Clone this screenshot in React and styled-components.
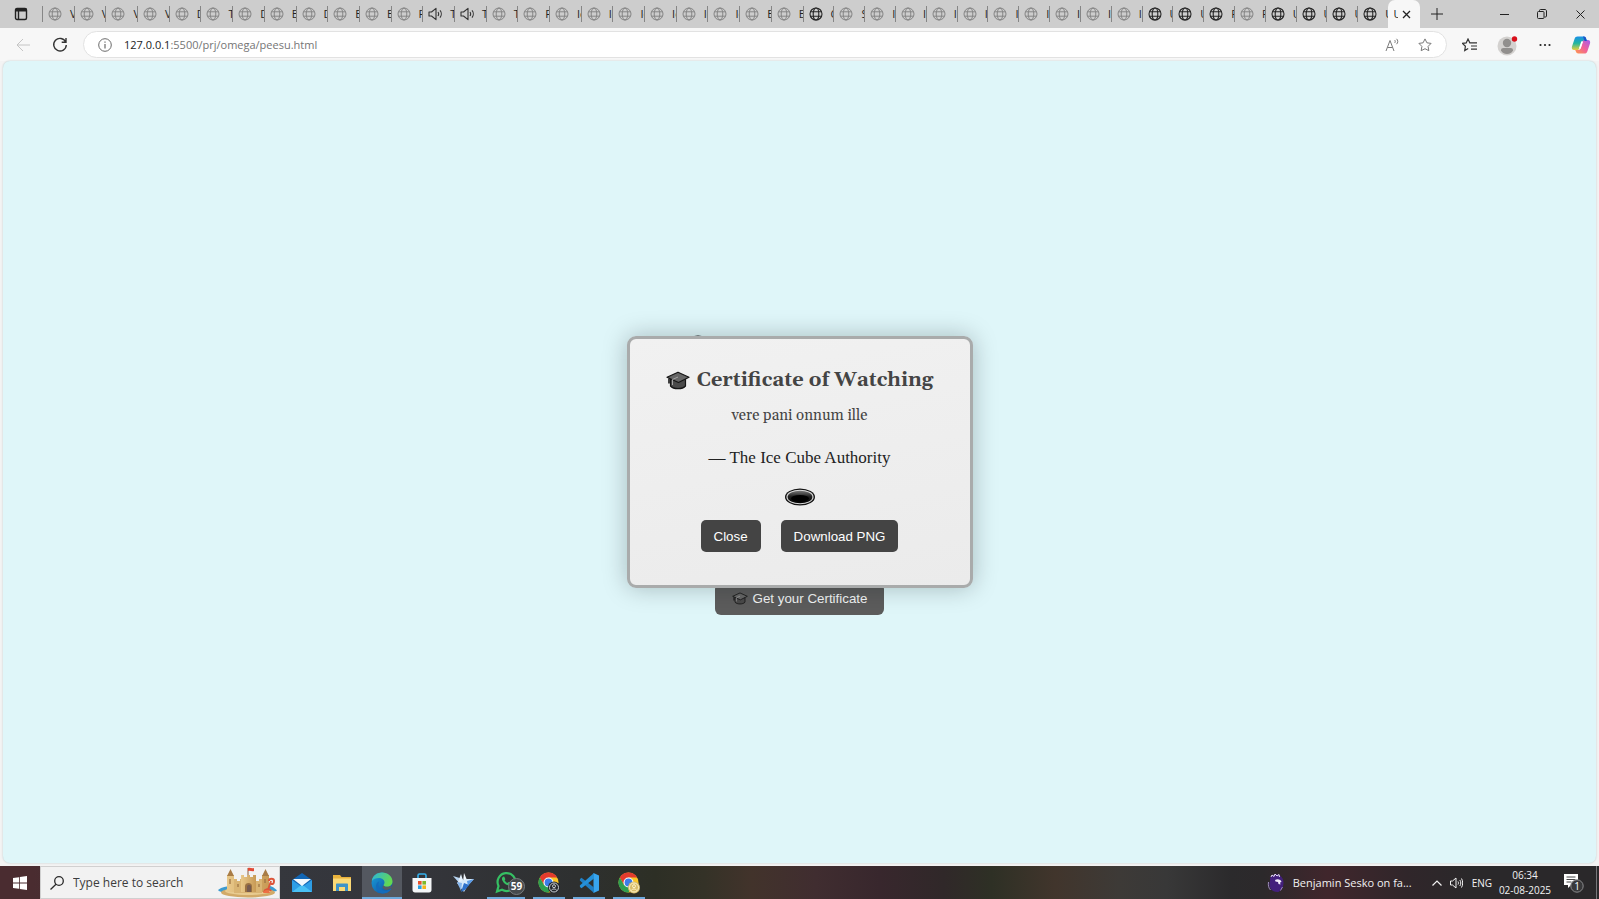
import React from "react";
import styled, { createGlobalStyle, css } from "styled-components";

const Global = createGlobalStyle`
  *, *::before, *::after { box-sizing: border-box; }
  html, body, #root { height: 100%; }
  body { margin: 0; overflow: hidden; background: #f7f7f7; }
  button { border: 0; margin: 0; padding: 0; background: none; color: inherit; cursor: pointer; }
  svg { display: block; flex: none; }
`;

const ui = `"Open Sans", "Noto Sans", sans-serif`;

const Window = styled.div`
  height: 100%;
  display: flex;
  flex-direction: column;
  font-family: ${ui};
`;

/* ---------- tab strip ---------- */
const TabStrip = styled.header`
  height: 28px;
  flex: none;
  display: flex;
  background: #cdcdcd;
  color: #222;
`;
const StripButton = styled.button`
  flex: none;
  width: ${(p) => p.$w}px;
  display: grid;
  place-items: center;
`;
const Tabs = styled.nav`
  flex: 1;
  min-width: 0;
  display: flex;
`;
const TabGroup = styled.div`
  flex: ${(p) => p.$share} 1 0;
  min-width: 0;
  display: grid;
  grid-template-columns: repeat(${(p) => p.$count}, minmax(0, 1fr));
`;
const Tab = styled.button`
  display: flex;
  align-items: center;
  gap: 8px;
  min-width: 0;
  overflow: hidden;
  font: 11px/16px ${ui};
  color: #222;
  &::before {
    content: "";
    flex: none;
    width: 1px;
    height: 16px;
    margin-right: -3px;
    background: #868686;
  }
`;
const ActiveTab = styled.div`
  flex: none;
  width: 32px;
  display: flex;
  align-items: center;
  justify-content: center;
  gap: 4px;
  padding-right: 4px;
  background: #f7f7f7;
  border-radius: 7px 7px 0 0;
  font: 11px/16px ${ui};
`;
const TabLabel = styled.span`
  width: 4px;
  overflow: hidden;
`;
const Gap = styled.div`
  flex: none;
  width: 31px;
`;

/* ---------- toolbar ---------- */
const Toolbar = styled.div`
  height: 33px;
  flex: none;
  display: flex;
  align-items: center;
  padding: 0 0 0 4px;
  background: #f7f7f7;
  color: #333;
`;
const ToolButton = styled.button`
  flex: none;
  width: 37px;
  height: 28px;
  display: grid;
  place-items: center;
`;
const AddressBar = styled.form`
  flex: 1;
  min-width: 0;
  height: 27px;
  margin: 0 4px 0 5px;
  padding: 0 9px 0 14px;
  display: flex;
  align-items: center;
  gap: 12px;
  background: #fff;
  border: 1px solid #e2e2e2;
  border-radius: 14px;
`;
const Url = styled.label`
  flex: 1;
  display: grid;
  align-items: center;
  font: 11px/16px ${ui};
  color: #757575;
  b { font-weight: 400; color: #1c1c1c; }
  > * { grid-area: 1 / 1; }
`;
const UrlInput = styled.input`
  width: 100%;
  border: 0;
  padding: 0;
  outline: 0;
  background: none;
  font: inherit;
`;
const InlineButton = styled.button`
  width: 24px;
  margin-right: ${(p) => p.$gap || 0}px;
  display: grid;
  place-items: center;
  color: #7a7a7a;
`;

/* ---------- page ---------- */
const Frame = styled.div`
  flex: 1;
  min-height: 0;
  display: flex;
  padding: 0 3px 3px;
  background: #f3f3f3;
`;
const Page = styled.main`
  flex: 1;
  display: grid;
  place-items: center;
  background: #dff6f9;
  border-radius: 7px;
  box-shadow: 0 0 2px #b9c4c6;
  overflow: hidden;
  > * { grid-area: 1 / 1; }
`;
const Backdrop = styled.section`
  display: flex;
  flex-direction: column;
  align-items: center;
  justify-content: space-between;
  height: 305px;
  padding-top: 25px;
`;
const BackdropHead = styled.div`
  width: 234px;
`;
const CertButton = styled.button`
  display: flex;
  align-items: center;
  gap: 5px;
  height: 32px;
  padding: 0 17px;
  border-radius: 6px;
  background: #5c5c5c;
  color: #f2f5f5;
  font-family: "Liberation Sans", Arial, sans-serif;
`;
const Dialog = styled.section`
  z-index: 1;
  display: flex;
  flex-direction: column;
  align-items: center;
  padding: 28px 36px 33px;
  width: 346px;
  border: 3px solid #a9abab;
  border-radius: 9px;
  background: linear-gradient(170deg, #f1f1f1, #eeeeee 50%, #ebebeb);
  box-shadow: 0 0 24px rgba(0, 20, 25, 0.26);
  font-family: Georgia, Gelasio, "Liberation Serif", serif;
  text-align: center;
`;
const Title = styled.h1`
  margin: 0;
  display: flex;
  align-items: center;
  gap: 7px;
  font-size: 20px;
  line-height: 26px;
  white-space: nowrap;
  color: #444;
`;
const Message = styled.p`
  margin: 11px 0 0;
  font-size: 15px;
  line-height: 24px;
  color: #444;
`;
const Signature = styled.p`
  margin: 18px 0;
  font: 17px/24px "Liberation Serif", "Times New Roman", serif;
  color: #222;
`;
const Actions = styled.div`
  display: flex;
  gap: 20px;
  margin-top: 14px;
`;
const ActionButton = styled.button`
  height: 32px;
  padding: 0 13px;
  border-radius: 5px;
  background: #444;
  color: #fff;
  font-family: "Liberation Sans", Arial, sans-serif;
`;

/* ---------- taskbar ---------- */
const Taskbar = styled.footer`
  height: 33px;
  flex: none;
  display: flex;
  color: #f2f2f2;
  background: linear-gradient(90deg,
    #4a2c30 0%, #4a2c30 2%, #35373d 17%, #34353b 26%, #2e3030 36%, #2d2f25 41%,
    #343227 44%, #42332b 47%, #402d30 51%, #38272d 55%, #302829 59%,
    #2e3025 62%, #41352c 66%, #3d3a37 70%, #383838 73%, #2b2a2c 77%,
    #2c292b 79%, #40262c 83%, #30262a 88%, #2a282a 92%, #2a282a 100%);
`;
const Start = styled.button`
  width: 40px;
  flex: none;
  display: grid;
  place-items: center;
`;
const Search = styled.label`
  width: 240px;
  flex: none;
  display: flex;
  align-items: center;
  padding-left: 9px;
  background: #f2f2f2;
  border: 1px solid #d0d0d0;
`;
const SearchInput = styled.input`
  flex: 1;
  min-width: 0;
  margin-left: 9px;
  padding: 0;
  border: 0;
  outline: 0;
  background: none;
  font: 12px/16px ${ui};
  &::placeholder { color: #3c3c3c; opacity: 1; }
`;
const Apps = styled.div`
  flex: none;
  width: 367px;
  margin-left: 2px;
  display: grid;
  grid-template-columns: repeat(9, 1fr);
`;
const AppButton = styled.button`
  display: grid;
  place-items: center;
  ${(p) => p.$open && css`box-shadow: inset 0 -2px #6ea9dc; margin: 0 4px;`}
  ${(p) => p.$active && css`box-shadow: inset 0 -2px #6ea9dc; background: #545860; margin: 0;`}
`;
const Tray = styled.div`
  margin-left: auto;
  display: flex;
  align-items: center;
  font-size: 11px;
  line-height: 16px;
`;
const TrayButton = styled.button`
  height: 33px;
  display: flex;
  align-items: center;
  gap: 8px;
  margin-right: ${(p) => p.$after || 0}px;
  font: ${(p) => p.$size || 11}px/16px ${ui};
  white-space: nowrap;
`;
const Clock = styled.time`
  width: 54px;
  margin-right: 12px;
  font-size: 10px;
  line-height: 15px;
  text-align: center;
  white-space: nowrap;
`;
const ShowDesktop = styled.button`
  width: 3px;
  height: 33px;
  border-left: 1px solid #77777a;
`;

/* ---------- drawings ---------- */
const Icon = ({ w = 16, h, vb, children, ...rest }) => (
  <svg width={w} height={h || w} viewBox={vb || `0 0 ${w} ${h || w}`} fill="none" stroke="currentColor" aria-hidden="true" {...rest}>
    {children}
  </svg>
);

const Globe = ({ light }) => (
  <Icon w={14} stroke={light ? "#858585" : "#262626"} strokeWidth={light ? 1 : 1.1}>
    <circle cx="7" cy="7" r="6" />
    <ellipse cx="7" cy="7" rx="2.8" ry="6" />
    <path d="M1.5 4.8h11M1.5 9.2h11" />
  </Icon>
);
const TabSpeaker = () => (
  <Icon w={14} stroke="#333" strokeWidth="1.1">
    <path d="M1 5h2.5L8 1.3v11.4L3.5 9H1zM10 5c.8 1.2.8 2.8 0 4M12 3.4c1.7 2 1.7 5.2 0 7.2" strokeLinejoin="round" />
  </Icon>
);
const Cap = ({ w, h }) => (
  <Icon w={w} h={h} vb="0 0 24 19" stroke="#151515" strokeWidth="1.2" strokeLinejoin="round">
    <path d="M4.500 8v7c3 3.600 12 3.600 15 0V8z" fill="#4a4a4a" />
    <path d="M1 6.200 12 1.200l11 5L12.500 11.500z" fill="#666" />
    <path d="M12 6 6.500 8.500V14" stroke="#a5a5a5" strokeWidth="1" />
    <path d="M3 7.5v5" strokeWidth="1.6" />
  </Icon>
);
const Hole = () => (
  <Icon w={30} h={18} stroke="none">
    <defs>
      <linearGradient id="hole" x1="0" y1="0" x2="0" y2="1">
        <stop offset="0" stopColor="#777" /><stop offset=".45" stopColor="#222" /><stop offset="1" stopColor="#000" />
      </linearGradient>
    </defs>
    <ellipse cx="15" cy="9" rx="15" ry="8.6" fill="#111" />
    <ellipse cx="15" cy="9" rx="13.6" ry="7.3" fill="#d8d8d8" />
    <ellipse cx="15" cy="9" rx="12.4" ry="6.2" fill="url(#hole)" />
    <ellipse cx="15" cy="10.4" rx="9" ry="3.4" fill="#000" />
  </Icon>
);
const Avatar = () => (
  <Icon w={22} h={22} vb="-1 0 22 22" stroke="none">
    <circle cx="10" cy="12" r="9.5" fill="#d3d1cf" />
    <circle cx="10" cy="9" r="4.2" fill="#918f8d" />
    <path d="M4 16.2c0-1.4 1-2.2 2.400-2.200h7.200c1.400 0 2.400.8 2.400 2.200-1 2.600-3.200 3.800-6 3.800s-5-1.200-6-3.800z" fill="#918f8d" />
    <circle cx="17.500" cy="5" r="2.700" fill="#d8101c" />
  </Icon>
);
const Copilot = () => (
  <Icon w={20} h={20} stroke="none">
    <defs>
      <linearGradient id="cpA" x1="0" y1="0" x2="0" y2="1"><stop offset="0" stopColor="#1a8fe8" /><stop offset=".5" stopColor="#22b6a0" /><stop offset="1" stopColor="#e8cf3c" /></linearGradient>
      <linearGradient id="cpB" x1="1" y1="0" x2="0" y2="1"><stop offset="0" stopColor="#a35cf0" /><stop offset=".5" stopColor="#f0609a" /><stop offset="1" stopColor="#ff9a4a" /></linearGradient>
    </defs>
    <path d="M6.500 1.500h6.200c1.400 0 2 .8 2.400 2l.8 2.500h-3c-1.600 0-2.300.8-2.700 2.200L8.500 13c-.5 1.500-1.200 2-2.500 2H3.200C1 15 .5 13.200 1 11.500l2.600-7.700c.5-1.500 1.400-2.300 2.900-2.300z" fill="url(#cpA)" />
    <path d="M13.500 18.500H7.300c-1.400 0-2-.8-2.400-2L4.200 15h3c1.500 0 2.200-.8 2.600-2.200L11.500 7c.5-1.500 1.200-2 2.500-2h2.800c2.200 0 2.700 1.800 2.200 3.500l-2.600 7.700c-.5 1.500-1.400 2.300-2.900 2.300z" fill="url(#cpB)" />
    <path d="M12 1.500h1c1.200.1 1.800.9 2.100 2l.8 2.500h-2.400z" fill="#1b55c8" />
    <path d="M11.200 6.500 8.800 13.500" stroke="#fff" strokeWidth="1.800" />
  </Icon>
);
const Castle = () => (
  <Icon w={62} h={31} stroke="none">
    <defs>
      <linearGradient id="sand" x1="0" y1="0" x2="1" y2="0"><stop offset="0" stopColor="#e8c88a" /><stop offset="1" stopColor="#c89a55" /></linearGradient>
    </defs>
    <path d="M1 23c4-3 8-4 14-4v6H6c-2 0-4-.5-5-2z" fill="#3d9bd0" />
    <path d="M46 18c6 0 12 2 14 6l-12 2z" fill="#3d9bd0" />
    <ellipse cx="31" cy="25.500" rx="27" ry="5" fill="#d2aa68" />
    <ellipse cx="31" cy="24" rx="23" ry="4" fill="#e8cb90" />
    <path d="M10 8h7v17h-7zM45 8h7v17h-7z" fill="url(#sand)" />
    <path d="m10 9 3.500-7L17 9zM45 9l3.500-7L52 9z" fill="#a97c46" />
    <path d="M17 12h3v2h3v-2h3v2h10v-2h3v2h3v-2h3v14H17z" fill="#d9b473" />
    <path d="M24 8h3v2h3V8h3v2h3V8h3v17H24z" fill="url(#sand)" />
    <path d="M28 25v-6c0-4 7-4 7 0v6z" fill="#9a7142" />
    <path d="M30 25v-5c0-3 4-3 4 0v5z" fill="#755a4f" />
    <path d="M31 8V1" stroke="#8c5a3a" strokeWidth="1" />
    <path d="M31 1c2-1 4 1 6 0v3c-2 1-4-1-6 0z" fill="#e24a36" />
    <path d="M13 12v5M48 12v4M21 17v3M42 17v3" stroke="#9a7142" strokeWidth="1.200" />
    <path d="m54 14-3 9M52 14c0-3 5-3 5 0s-1 3-3 3M47 25c1-3 5-4 7-1" stroke="#dd5439" strokeWidth="2" />
    <path d="M46 26c1-4 6-4 7 0z" fill="#ed7044" />
  </Icon>
);
const Mail = () => (
  <Icon w={22} h={20} stroke="none">
    <path d="M1 7 11 0l10 7v12H1z" fill="#1266b4" />
    <path d="m1 7 10 7 10-7v11c0 .6-.4 1-1 1H2c-.6 0-1-.4-1-1z" fill="#2e9ee6" />
    <path d="m1 19 10-7.500L21 19z" fill="#49c0f4" />
    <path d="M2 6h18l-9 7z" fill="#f2f8fd" />
  </Icon>
);
const Explorer = () => (
  <Icon w={20} h={18} stroke="none">
    <path d="M1 1h7l1.500 2H19v14H1z" fill="#e9b23c" />
    <path d="M1 4.500h18V17H1z" fill="#fbd976" />
    <path d="M4 10.500c0-.6.400-1 1-1h10c.6 0 1 .4 1 1V17h-3v-4H7v4H4z" fill="#3f93c8" />
  </Icon>
);
const Edge = () => (
  <Icon w={22} stroke="none">
    <defs>
      <linearGradient id="eA" x1="0" y1="0" x2="1" y2=".4"><stop offset="0" stopColor="#2cb5dd" /><stop offset="1" stopColor="#63d951" /></linearGradient>
      <linearGradient id="eB" x1="0" y1="0" x2="1" y2="1"><stop offset="0" stopColor="#1aa0dd" /><stop offset="1" stopColor="#0c4c9c" /></linearGradient>
    </defs>
    <circle cx="11" cy="11" r="10.500" fill="url(#eB)" />
    <path d="M.8 9C1.500 4 5.500.5 11 .5c6 0 10.500 4.200 10.500 9 0 3.300-2.500 5.300-5.500 5.300-2.500 0-3.500-1-3.500-1.600 0-.7 1-1 1-2.700 0-2.300-2.200-4.500-5.500-4.500C5 6 2 7 .8 9z" fill="url(#eA)" />
    <path d="M8.200 9.500c-2 3.500.3 9 6 9 2.300 0 4.300-.8 5.500-1.800.4-.4.800 0 .5.500C18 20.500 14.500 21.500 11.500 21.500 6.500 21 4 16 5.500 12c.6-1.500 1.600-2.300 2.700-2.500z" fill="#146cbc" />
    <path d="M12.600 13.300c0 .8 1.200 1.500 3.400 1.500 1.700 0 3.200-.5 4.200-1.600l.6 2.400c-1.600 2-4 2.500-6 2.300-2.500-.3-4.500-2.500-2.200-4.600z" fill="#555c66" />
  </Icon>
);
const Store = () => (
  <Icon w={20} h={20} stroke="none">
    <path d="M6 5V2.500C6 1.500 6.500 1 7.500 1h5c1 0 1.500.5 1.500 1.500V5" stroke="#35b0ec" strokeWidth="1.600" />
    <path d="M.5 5h19v12c0 1.500-1 2.500-2.500 2.500H3C1.500 19.500.5 18.500.5 17z" fill="#f4f6f8" />
    <path d="M6 8h3.600v3.600H6z" fill="#e8512c" /><path d="M10.400 8H14v3.600h-3.600z" fill="#7db82c" />
    <path d="M6 12.400h3.600V16H6z" fill="#289fe0" /><path d="M10.400 12.400H14V16h-3.600z" fill="#f5b51c" />
  </Icon>
);
const Bird = () => (
  <Icon w={22} h={20} stroke="none">
    <path d="m1 3 10 3-2 6z" fill="#b9d6f3" /><path d="m9 1 3 10-6-2z" fill="#e4f0fb" />
    <path d="m12 0-1 9 4-2z" fill="#f2f8fd" />
    <path d="m5 10 9-4 8 0-6 6-4 7z" fill="#d7e9fa" />
    <path d="m15 8 7-2-6 7z" fill="#5b9be6" />
    <path d="m9 19 3-9 5 2-4 5z" fill="#2d71cc" /><path d="m5 9 5 1-1 8z" fill="#86b6ee" />
  </Icon>
);
const WhatsApp = () => (
  <Icon w={38} h={26} vb="-7 0 38 26" stroke="none">
    <path d="M3 21.500 4.500 16A9 9 0 1 1 8 19.800z" stroke="#35c063" strokeWidth="2.200" />
    <path d="M8.800 7c-1.500 1.200-1 3.500 1 5.700s4.500 3.200 6.300 1.800c.6-.6.500-1.300 0-1.600l-1.600-.9-1.200.9c-1-.4-2.300-1.600-2.700-2.700l.8-1L10.400 7c-.4-.7-1-.6-1.600 0z" fill="#35c063" />
    <circle cx="22.500" cy="16.500" r="8" fill="#464a4d" stroke="#777b7d" strokeWidth="1" />
    <text x="22.500" y="20" textAnchor="middle" fontFamily="Open Sans, sans-serif" fontSize="10" fontWeight="700" fill="#fff">59</text>
  </Icon>
);
const Chrome = ({ gold }) => (
  <Icon w={27} h={22} vb="-3 0 27 22" stroke="none">
    <circle cx="10.500" cy="10.500" r="10" fill="#fbc626" />
    <path d="M1.800 5.500a10 10 0 0 1 17.400 0h-8.700L6 13z" fill="#e33b2e" />
    <path d="M1.800 5.500a10 10 0 0 0 8.700 15l4.300-7.500H6z" fill="#2f9e4f" />
    <circle cx="10.500" cy="10.500" r="5" fill="#fff" /><circle cx="10.500" cy="10.500" r="3.900" fill="#3d7de8" />
    <circle cx="16" cy="15.500" r="6" fill={gold ? "#d9bd6a" : "#24282e"} />
    <g stroke={gold ? "#fff3c8" : "#c8ccd0"} strokeWidth="1"><circle cx="16" cy="15.500" r="4.500" /><circle cx="16" cy="14.200" r="1.500" /><path d="M13.200 18.500c.8-2 4.800-2 5.600 0" /></g>
  </Icon>
);
const Code = () => (
  <Icon w={20} h={20} stroke="none">
    <path d="M14.500 0 20 2.500v15L14.500 20z" fill="#38a5ee" />
    <path d="m1 6 1.500-1.300L15 14.500V20L.8 7.500z" fill="#1f7fc4" />
    <path d="m1 14 1.500 1.300L15 5.500V0L.8 12.500z" fill="#2590d8" />
  </Icon>
);
const Lion = () => (
  <Icon w={18} h={20} stroke="none">
    <path d="M3 6c0-2 2-4 5-4.500C12 .5 16 4 16.500 9c.3 4-1.500 8-5 10-4 .5-8.500-2-9-6.500C2 10 3.500 9 3 6z" fill="#43207c" />
    <path d="m4 4 1-2 2 1.500L8 1l2 2 2-1.500.5 2.500" stroke="#e8def6" strokeWidth="1" />
    <path d="M8 7c2-1.500 6-1 6.500 2l-1.500.5.5 2-2-.5-.5-2-2.500-.5z" fill="#f1ecfa" />
    <path d="M1.500 9c-.5 3 0 6 2 8M15.500 14l-2 3.500" stroke="#b9a4e0" strokeWidth=".8" />
  </Icon>
);

const wide = "V V V V D T D E D E E F ♪T ♪T T F Ic Ic Ic Ic Ic Ic E E".split(" ");
const narrow = "*C S I I I I I I I I I *U *U *F F *U *U *U *U".split(" ");
const renderTab = (t, i) => (
  <Tab key={i}>
    {t[0] === "♪" ? <TabSpeaker /> : <Globe light={t[0] !== "*"} />}
    <span>{t.replace(/[♪*]/, "")}</span>
  </Tab>
);

export default function App() {
  return (
    <Window>
      <Global />
      <TabStrip>
        <StripButton $w={42} aria-label="Tab actions">
          <Icon w={14} h={14} strokeWidth="1.400">
            <rect x="1.500" y="1.500" width="11" height="11" rx="1.500" /><path d="M1.500 3h11" strokeWidth="3" /><path d="M4.500 4v8" />
          </Icon>
        </StripButton>
        <Tabs>
          <TabGroup $share={760} $count={24}>{wide.map(renderTab)}</TabGroup>
          <TabGroup $share={585} $count={19}>{narrow.map(renderTab)}</TabGroup>
          <ActiveTab>
            <TabLabel>U</TabLabel>
            <button aria-label="Close tab">
              <Icon w={9} strokeWidth="1.300"><path d="m1 1 7 7M8 1 1 8" /></Icon>
            </button>
          </ActiveTab>
        </Tabs>
        <StripButton $w={34} aria-label="New tab"><Icon w={12}><path d="M6 0v12M0 6h12" /></Icon></StripButton>
        <Gap />
        <StripButton $w={38} aria-label="Minimize"><Icon w={9}><path d="M0 4.500h9" /></Icon></StripButton>
        <StripButton $w={38} aria-label="Restore">
          <Icon w={10}><rect x=".5" y="2.500" width="6.500" height="7" rx="1" /><path d="M2.500 2V1.500c0-.6.400-1 1-1h4.500c.8 0 1.500.7 1.500 1.500v5c0 .6-.4 1-1 1H7.500" /></Icon>
        </StripButton>
        <StripButton $w={38} aria-label="Close"><Icon w={9}><path d="m.5.5 8 8M8.500.5l-8 8" /></Icon></StripButton>
      </TabStrip>

      <Toolbar>
        <ToolButton aria-label="Back"><Icon w={14} stroke="#c4c4c4"><path d="M14 7H1M7 1 1 7l6 6" /></Icon></ToolButton>
        <ToolButton aria-label="Reload">
          <Icon w={16} strokeWidth="1.400"><path d="M13.700 5A6.300 6.300 0 1 0 14.300 8M14 1v4.300H9.700" /></Icon>
        </ToolButton>
        <AddressBar onSubmit={(e) => e.preventDefault()}>
          <Icon w={14} stroke="#6a6a6a"><circle cx="7" cy="7" r="6.300" /><path d="M7 6v4.500M7 3.500v1.200" strokeWidth="1.200" /></Icon>
          <Url>
            <span><b>127.0.0.1</b>:5500/prj/omega/peesu.html</span>
            <UrlInput aria-label="Address" />
          </Url>
          <InlineButton type="button" aria-label="Read aloud" $gap={-3}>
            <Icon w={15} h={14}><path d="m1 13 4-10.500L9 13M2.500 9.500h5M9.500 2c1 .8 1 2.200 0 3M11.500.8c1.700 1.400 1.700 4 0 5.400" /></Icon>
          </InlineButton>
          <InlineButton type="button" aria-label="Add to favorites">
            <Icon w={14}><path d="m7 .9 1.900 3.900 4.200.6-3 3 .7 4.300L7 10.700l-3.800 2 .7-4.300-3-3 4.200-.6z" /></Icon>
          </InlineButton>
        </AddressBar>
        <ToolButton aria-label="Favorites">
          <Icon w={15} h={14} strokeWidth="1.200"><path d="M10 4.800H7.800L6 1 4.200 4.900l-3.700.5 2.900 2.900-.7 4.300 3.500-2M9 4.800h6M9 8h6M9 11.200h6" /></Icon>
        </ToolButton>
        <ToolButton aria-label="Profile"><Avatar /></ToolButton>
        <ToolButton aria-label="Settings and more">
          <Icon w={14} h={4} vb="-2 0 14 4" stroke="none" fill="#222"><circle cx="1.500" cy="2" r="1.100" /><circle cx="6" cy="2" r="1.100" /><circle cx="10.500" cy="2" r="1.100" /></Icon>
        </ToolButton>
        <ToolButton aria-label="Copilot"><Copilot /></ToolButton>
      </Toolbar>

      <Frame>
        <Page>
          <Backdrop>
            <BackdropHead><Hole /></BackdropHead>
            <CertButton><Cap w={16} h={13} />Get your Certificate</CertButton>
          </Backdrop>
          <Dialog role="dialog" aria-labelledby="cert-title">
            <Title id="cert-title"><Cap w={24} h={19} />Certificate of Watching</Title>
            <Message>vere pani onnum ille</Message>
            <Signature>— The Ice Cube Authority</Signature>
            <Hole />
            <Actions>
              <ActionButton>Close</ActionButton>
              <ActionButton>Download PNG</ActionButton>
            </Actions>
          </Dialog>
        </Page>
      </Frame>

      <Taskbar>
        <Start aria-label="Start">
          <Icon w={14} stroke="none" fill="#fff"><path d="M0 2 6 1.200v5.400H0zM6.800 1 14 0v6.600H6.800zM0 7.400h6v5.400L0 12zM6.800 7.400H14V14l-7.200-1z" /></Icon>
        </Start>
        <Search>
          <Icon w={14} stroke="#2a2a2a" strokeWidth="1.300"><circle cx="9" cy="5" r="4.300" /><path d="M6 8.200.5 13.500" /></Icon>
          <SearchInput aria-label="Search" placeholder="Type here to search" />
          <Castle />
        </Search>
        <Apps>
          <AppButton aria-label="Mail"><Mail /></AppButton>
          <AppButton aria-label="File Explorer"><Explorer /></AppButton>
          <AppButton aria-label="Edge" $active><Edge /></AppButton>
          <AppButton aria-label="Store"><Store /></AppButton>
          <AppButton aria-label="Bird"><Bird /></AppButton>
          <AppButton aria-label="WhatsApp" $open><WhatsApp /></AppButton>
          <AppButton aria-label="Chrome" $open><Chrome /></AppButton>
          <AppButton aria-label="Code" $open><Code /></AppButton>
          <AppButton aria-label="Chrome, second profile" $open><Chrome gold /></AppButton>
        </Apps>
        <Tray>
          <TrayButton $after={20}><Lion />Benjamin Sesko on fa...</TrayButton>
          <TrayButton $after={8} aria-label="Hidden icons"><Icon w={10} h={6} strokeWidth="1.200"><path d="m.5 5.500 4.500-4.500 4.500 4.500" /></Icon></TrayButton>
          <TrayButton $after={9} aria-label="Volume">
            <Icon w={13} h={12}><path d="M.5 4h2L6 1v10L2.500 8h-2zM8 4.500c.6 1 .6 2 0 3M9.800 3c1.300 1.800 1.300 4.200 0 6M11.500 1.500c1.600 2.600 1.600 6.400 0 9" /></Icon>
          </TrayButton>
          <TrayButton $after={6} $size={10}>ENG</TrayButton>
          <Clock>06:34<br />02-08-2025</Clock>
          <TrayButton $after={12} aria-label="Notifications">
            <Icon w={20} h={22} stroke="none">
              <path d="M0 2h14v11H7l-3 3v-3H0z" fill="#fff" /><path d="M2.500 5h9M2.500 7.500h9M2.500 10h5" stroke="#444" />
              <circle cx="13" cy="14" r="6.200" fill="#38383a" stroke="#8a8a8c" />
              <text x="13" y="17.500" textAnchor="middle" fontFamily="Open Sans, sans-serif" fontSize="10" fill="#fff">1</text>
            </Icon>
          </TrayButton>
          <ShowDesktop aria-label="Show desktop" />
        </Tray>
      </Taskbar>
    </Window>
  );
}
